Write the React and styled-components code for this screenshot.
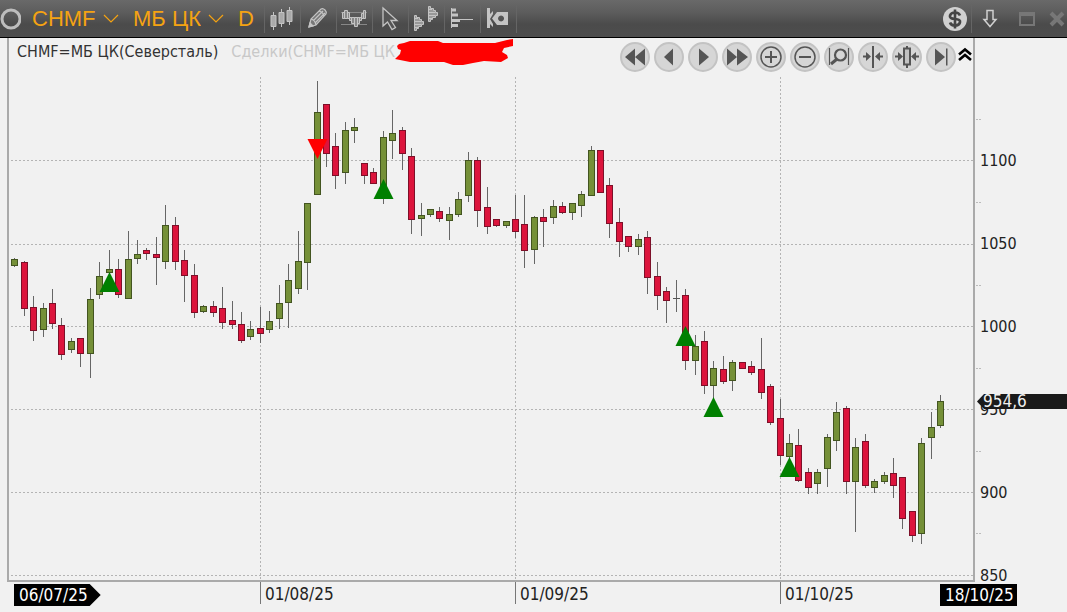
/*
 * ChartPage
 *
 * Candlestick chart window with toolbar, price axis and time axis
 */
import React from 'react';
import styled, { createGlobalStyle, css } from 'styled-components';

const GlobalStyle = createGlobalStyle`
  * {
    box-sizing: border-box;
  }
  body {
    margin: 0;
    background: #f1f1f1;
    font-family: "DejaVu Sans Condensed", "Noto Sans", sans-serif;
    color: #222;
  }
`;

const ChartWindow = styled.div`
  display: flex;
  flex-direction: column;
  min-height: 100vh;
`;

const Toolbar = styled.header`
  display: flex;
  align-items: center;
  height: 38px;
  background: linear-gradient(#696969, #5c5c5c 35%, #4b4b4b 65%, #4d4d4d);
  border-bottom: 1px solid #000;
`;

const plainButton = css`
  display: flex;
  align-items: center;
  justify-content: center;
  padding: 0;
  border: 0;
  background: none;
  cursor: pointer;
`;

const Ring = styled.button`
  ${plainButton}
  width: 32px;
  height: 37px;
  padding-right: 11px;
`;

const Picker = styled.label`
  display: flex;
  align-items: center;
  gap: 7px;
  margin-right: 14px;
`;

const PickerSelect = styled.select`
  appearance: none;
  padding: 0;
  border: 0;
  background: none;
  color: #f5a312;
  font-family: "Liberation Sans", Arial, sans-serif;
  font-size: 22px;
  line-height: 28px;
`;

const Period = styled.button`
  ${plainButton}
  color: #f5a312;
  font-family: "Liberation Sans", Arial, sans-serif;
  font-size: 22px;
  line-height: 28px;
`;

const Tools = styled.div`
  display: flex;
  margin-left: 10px;
  border-right: 1px solid #656565;
`;

const ToolButton = styled.button`
  ${plainButton}
  width: 36px;
  height: 28px;
  border-left: 1px solid #656565;
`;

const WindowButtons = styled.div`
  display: flex;
  margin-left: auto;
`;

const WindowButton = styled.button`
  ${plainButton}
  width: ${(props) => props.$width}px;
  height: 28px;
  border-left: 1px solid ${(props) => (props.$divided ? '#656565' : 'transparent')};
`;

const ChartArea = styled.main`
  flex: 1;
  display: grid;
  grid-template-columns: minmax(0, 1fr) 92px;
  grid-template-rows: minmax(0, 1fr) 30px;
  padding-left: 7px;
`;

const Panel = styled.section`
  display: flex;
  flex-direction: column;
  border: 2px solid #aaa;
  border-top: 0;
`;

const PanelHeader = styled.div`
  display: flex;
  align-items: center;
  height: 37px;
`;

const Legend = styled.div`
  display: flex;
  align-items: center;
  height: 28px;
  padding-left: 8px;
  margin-bottom: 10px;
  font-size: 16px;
  line-height: 20px;
  white-space: nowrap;
`;

const Series = styled.span`
  margin-right: 13px;
  color: ${(props) => (props.$muted ? '#c8c8c8' : '#333')};
  &:last-of-type {
    margin-right: 0;
  }
`;

const NavButtons = styled.div`
  display: flex;
  gap: 4px;
  margin-left: auto;
`;

const NavButton = styled.button`
  ${plainButton}
  width: 30px;
  height: 30px;
  border: 2px solid #c3c3c3;
  border-radius: 50%;
  background: #d6d6d6;
`;

const CollapseButton = styled.button`
  ${plainButton}
  width: 17px;
  height: 30px;
  padding-bottom: 6px;
`;

const Plot = styled.svg`
  display: block;
  flex: 1;
  width: 100%;
  height: 0;
  min-height: 300px;
`;

const PriceAxis = styled.div`
  position: relative;
  grid-column: 2;
  grid-row: 1 / 3;
  display: flex;
  flex-direction: column;
  justify-content: space-between;
  padding: 114px 0 27px 5px;
  font-size: 16px;
  line-height: 18px;
`;

const PriceTag = styled.div`
  position: absolute;
  top: 62%;
  left: 2px;
  right: 0;
  padding-left: 6px;
  background: #1a1a1a;
  color: #f1f1f1;
  font-size: 17px;
  line-height: 15px;
  clip-path: polygon(0 50%, 7px 0, 100% 0, 100% 100%, 7px 100%);
`;

const TimeAxis = styled.div`
  grid-column: 1 / 3;
  grid-row: 2;
  display: grid;
  grid-template-columns: 246fr 255fr 265fr 160fr 127px;
  align-items: start;
  padding-left: 7px;
  font-size: 17px;
  line-height: 20px;
`;

const DateLabel = styled.div`
  padding-left: 4px;
  padding-top: 2px;
  border-left: 1px solid #777;
`;

const DateBadge = styled.div`
  justify-self: start;
  margin-top: 2px;
  padding: 1px ${(props) => (props.$arrow ? 13 : 3)}px 1px 5px;
  background: #000;
  color: #fff;
  ${(props) => props.$arrow && css`
    clip-path: polygon(0 0, calc(100% - 11px) 0, 100% 50%, calc(100% - 11px) 100%, 0 100%);
  `}
`;

// direction, high, body top, body bottom, low
const candles = [
  ['G', 258, 259, 265, 266], ['R', 261, 262, 308, 315], ['R', 296, 307, 330, 340],
  ['G', 303, 308, 329, 336], ['R', 289, 303, 323, 328], ['R', 318, 325, 354, 359],
  ['G', 338, 341, 349, 352], ['R', 338, 338, 353, 366], ['G', 288, 299, 353, 377],
  ['G', 262, 276, 294, 298], ['G', 250, 269, 272, 290], ['R', 259, 269, 294, 297],
  ['G', 231, 259, 298, 298], ['G', 240, 254, 258, 263], ['R', 248, 250, 253, 259],
  ['R', 237, 254, 257, 284], ['G', 205, 225, 261, 268], ['R', 217, 225, 261, 269],
  ['R', 250, 260, 275, 301], ['R', 264, 275, 312, 317], ['G', 305, 306, 311, 312],
  ['R', 301, 306, 312, 316], ['R', 287, 308, 322, 328], ['R', 301, 320, 324, 328],
  ['R', 312, 324, 340, 342], ['G', 321, 329, 336, 339], ['R', 307, 328, 333, 342],
  ['G', 311, 321, 329, 332], ['G', 285, 303, 318, 328], ['G', 264, 280, 302, 327],
  ['G', 231, 261, 288, 293], ['G', 203, 203, 262, 289], ['G', 81, 112, 194, 194],
  ['R', 104, 104, 153, 166], ['R', 133, 146, 175, 188], ['G', 122, 130, 172, 183],
  ['G', 118, 127, 130, 142], ['R', 163, 163, 175, 183], ['R', 168, 172, 183, 183],
  ['G', 131, 137, 190, 203], ['G', 110, 133, 140, 158], ['R', 127, 130, 153, 169],
  ['R', 148, 156, 219, 233], ['G', 203, 215, 218, 235], ['G', 209, 209, 214, 216],
  ['R', 207, 211, 218, 221], ['G', 207, 214, 220, 239], ['G', 192, 199, 214, 216],
  ['G', 152, 160, 195, 201], ['R', 157, 160, 210, 226], ['R', 187, 207, 226, 233],
  ['R', 219, 219, 225, 226], ['G', 221, 221, 225, 227], ['R', 195, 219, 231, 237],
  ['R', 195, 224, 250, 267], ['G', 216, 217, 249, 263], ['R', 209, 217, 221, 246],
  ['G', 200, 206, 217, 223], ['R', 202, 206, 212, 213], ['G', 203, 203, 212, 219],
  ['G', 191, 194, 205, 216], ['G', 146, 150, 195, 195], ['R', 150, 150, 192, 192],
  ['R', 178, 185, 223, 237], ['R', 208, 222, 241, 256], ['R', 236, 236, 246, 251],
  ['G', 234, 239, 246, 254], ['R', 231, 237, 277, 293], ['R', 262, 276, 295, 309],
  ['R', 287, 291, 300, 322], ['G', 280, 298, 298, 311], ['R', 289, 295, 360, 369],
  ['G', 335, 346, 360, 374], ['R', 331, 341, 385, 393], ['G', 361, 368, 385, 399],
  ['R', 356, 369, 381, 383], ['G', 360, 362, 380, 390], ['R', 362, 362, 368, 368],
  ['R', 361, 366, 372, 374], ['R', 338, 369, 392, 398], ['R', 384, 386, 422, 424],
  ['R', 399, 418, 455, 464], ['G', 434, 443, 456, 460], ['R', 429, 445, 480, 481],
  ['R', 468, 472, 487, 493], ['G', 469, 472, 483, 493], ['G', 434, 437, 468, 486],
  ['G', 402, 412, 440, 450], ['R', 406, 408, 481, 493], ['G', 438, 447, 481, 531],
  ['R', 434, 441, 485, 487], ['G', 479, 481, 487, 492], ['G', 472, 475, 481, 483],
  ['R', 458, 473, 485, 497], ['R', 477, 477, 518, 528], ['R', 511, 511, 535, 541],
  ['G', 438, 443, 533, 543], ['G', 412, 427, 437, 458], ['G', 395, 401, 425, 427]
];

const FIRST_X = 14.2;
const STEP = 926 / 98;

// candle number, tip y
const buys = [[10, 272], [39, 179], [71, 326], [74, 397], [82, 457]];
const sells = [[32, 159]];

const priceLines = [160, 244, 326, 409, 492, 575];
const priceTicks = [119, 202, 285, 368, 451, 533];
const monthLines = [26, 53, 81];
const prices = ['1100', '1050', '1000', '950', '900', '850'];
const dates = ['01/08/25', '01/09/25', '01/10/25'];

const candleX = (index) => Math.round(FIRST_X + index * STEP);

const candleArray = candles.map(([dir, high, top, bottom, low], index) => {
  const x = candleX(index);
  return (
    <g key={index}>
      <path d={`M${x + 0.5} ${high}V${low + 1}`} stroke="#666" />
      {top === bottom ? (
        <path d={`M${x - 3} ${top + 0.5}h7`} stroke="#555" />
      ) : (
        <rect
          x={x - 2.5}
          y={top + 0.5}
          width="6"
          height={bottom - top}
          fill={dir === 'G' ? '#759038' : '#dc143c'}
          stroke={dir === 'G' ? '#435520' : '#7d1029'}
        />
      )}
    </g>
  );
});

function CandleChart() {
  return (
    <Plot viewBox="9 75 964 505" preserveAspectRatio="none" role="img" aria-label="CHMF">
      <g fill="none" stroke="#b4b4b4" strokeDasharray="2 2">
        {priceLines.map((y) => <path key={y} d={`M11 ${y + 0.5}H973`} />)}
        {monthLines.map((i) => <path key={i} d={`M${candleX(i) + 0.5} 77V580`} />)}
      </g>
      {candleArray}
      {buys.map(([i, y]) => (
        <path key={i} d={`M${candleX(i) + 0.5} ${y}l10 20h-20z`} fill="#008000" />
      ))}
      {sells.map(([i, y]) => (
        <path key={i} d={`M${candleX(i) + 0.5} ${y}l-10 -20h20z`} fill="#ff0000" />
      ))}
    </Plot>
  );
}

const TickMarks = styled.svg`
  position: absolute;
  top: 0;
  left: 0;
  width: 8px;
  height: 100%;
`;

const Chevron = () => (
  <svg width="16" height="9" fill="none" stroke="#f5a312" strokeWidth="1.2">
    <path d="M1 1l7 7 7-7" />
  </svg>
);

const toolIcons = [
  {
    name: 'Candles',
    icon: (
      <g fill="#aaa" stroke="#c4c4c4">
        <path d="M4.500 6v18M12.500 3v18M20.500 1v18" fill="none" />
        <path d="M2 9.500h5v11H2zM10 6.500h5v11h-5zM18 4.500h5v11h-5z" />
      </g>
    )
  },
  {
    name: 'Draw',
    icon: (
      <g fill="#777" stroke="#c4c4c4" strokeWidth="1.200">
        <path d="M4 21l2-8L16 3q2-1 4 1t1 4L11 19z" />
        <path d="M6 13q4 1 5 6M8.500 14.500L18 5M10 17L20 7M14 5q4 1 5 5" fill="none" />
        <path d="M4 21l1-4 3 3z" fill="#c4c4c4" />
      </g>
    )
  },
  {
    name: 'Indicators',
    icon: (
      <g stroke="#c4c4c4" fill="#888">
        <path d="M0 6.500h26M0 18.500h26" stroke="#888" />
        <path d="M1.500 6.500h2v6h-2zM3.500 4.500h3v8h-3zM6.500 6.500h2v6h-2zM8.500 11.500h2v3h-2zM10.500 11.500h3v6h-3zM13.500 11.500h3v9h-3zM16.500 11.500h2v6h-2zM18.500 11.500h2v3h-2zM20.500 7.500h2v5h-2zM22.500 4.500h2v8h-2z" />
      </g>
    )
  },
  {
    name: 'Cursor',
    icon: <path d="M6 2v18l4.500-4 4.500 7.500 3.500-2-4.500-7h6z" fill="#555" stroke="#c4c4c4" strokeWidth="1.300" />
  },
  {
    name: 'Volume profile',
    icon: (
      <g stroke="#c4c4c4" fill="#999">
        <path d="M1.500 9.500h2v2h3v2h2v2h2v3h-2v2h-3v2h-2v2h-2z" />
        <path d="M1 12.500h4M1 15.500h7M1 18.500h7M1 21.500h4" />
        <path d="M15.500 .500h2v2h3v2h2v2h2v3h-2v2h-3v2h-2v2h-2z" />
        <path d="M15 3.500h4M15 6.500h7M15 9.500h7M15 12.500h4" />
      </g>
    )
  },
  {
    name: 'Order book',
    icon: (
      <g stroke="#c4c4c4" fill="none">
        <path d="M2 4h5M2 9h7M2 14.500h9M2 19.500h7" strokeWidth="3" />
        <path d="M2.500 2v20M10 13.500h14" />
      </g>
    )
  },
  {
    name: 'Hide',
    icon: (
      <g fill="#c4c4c4">
        <path d="M2 2h3v6l3-3v3l-3 5 3 5v3l-3-3v4H2z" />
        <path d="M12 6h11v13H12l-5-6.500zM16 9.500a3 3 0 1 0 .1 0z" fillRule="evenodd" />
      </g>
    )
  }
];

const navIcons = [
  { name: 'First', icon: <path d="M13 4.500v17L3 13zM23 4.500v17L13 13z" fill="#555" /> },
  { name: 'Back', icon: <path d="M17 4.500v17L8 13z" fill="#555" /> },
  { name: 'Forward', icon: <path d="M9 4.500v17L19 13z" fill="#555" /> },
  { name: 'Last', icon: <path d="M3 4.500v17L13 13zM13 4.500v17L24 13z" fill="#555" /> },
  {
    name: 'Zoom in',
    icon: (
      <g fill="none" stroke="#555">
        <circle cx="13" cy="13" r="10" strokeWidth="1.500" />
        <path d="M7 13h12M13 7v12" strokeWidth="2" />
      </g>
    )
  },
  {
    name: 'Zoom out',
    icon: (
      <g fill="none" stroke="#555">
        <circle cx="13" cy="13" r="10" strokeWidth="1.500" />
        <path d="M7 13h12" strokeWidth="2" />
      </g>
    )
  },
  {
    name: 'Zoom area',
    icon: (
      <g fill="none" stroke="#555">
        <path d="M3.500 4v17M22.500 4v17" strokeWidth="1.200" />
        <circle cx="14.500" cy="11" r="5.500" strokeWidth="2.200" />
        <path d="M11 15l-6 5" strokeWidth="3" />
      </g>
    )
  },
  {
    name: 'Narrow',
    icon: (
      <g fill="#555" stroke="#555">
        <path d="M13 2v22M3 12.500h5M18 12.500h5" strokeWidth="2" />
        <path d="M6 8v9l5-4.500zM20 8v9l-5-4.500z" stroke="none" />
      </g>
    )
  },
  {
    name: 'Fit candles',
    icon: (
      <g fill="none" stroke="#555">
        <path d="M13 2v3M13 21v3M1 12.500h4M21 12.500h4" strokeWidth="2" />
        <path d="M10 4.500h6v16h-6z" fill="#c3c3c3" strokeWidth="2" />
        <path d="M4 8v9l5-4.500zM22 8v9l-5-4.500z" fill="#555" stroke="none" />
      </g>
    )
  },
  { name: 'To end', icon: <path d="M7 4.500v17L17 13zM18 4.500h1.500v17H18z" fill="#555" /> }
];

export default function App() {
  return (
    <ChartWindow>
      <GlobalStyle />
      <Toolbar>
        <Ring aria-label="Link">
          <svg width="22" height="22" fill="none">
            <circle cx="11" cy="11" r="9" stroke="#bdbdbd" strokeWidth="3" />
          </svg>
        </Ring>
        <Picker>
          <PickerSelect aria-label="Instrument">
            <option>CHMF</option>
          </PickerSelect>
          <Chevron />
        </Picker>
        <Picker>
          <PickerSelect aria-label="Board">
            <option>МБ ЦК</option>
          </PickerSelect>
          <Chevron />
        </Picker>
        <Period>D</Period>
        <Tools>
          {toolIcons.map(({ name, icon }) => (
            <ToolButton key={name} aria-label={name}>
              <svg width="26" height="25">{icon}</svg>
            </ToolButton>
          ))}
        </Tools>
        <WindowButtons>
          <WindowButton $width={34} aria-label="Trade">
            <svg width="26" height="26">
              <circle cx="13" cy="13" r="12" fill="#d0d0d0" />
              <path
                d="M18 9.500q-1-3-5-3t-5 3 5 3.500 5 3.500-5 3-5-3M13 3.500v19"
                fill="none"
                stroke="#444"
                strokeWidth="2.600"
              />
            </svg>
          </WindowButton>
          <WindowButton $width={36} $divided aria-label="Pin">
            <svg width="16" height="20" fill="none" stroke="#d0d0d0" strokeWidth="1.500">
              <path d="M5 1.500h6v9h3l-6 7-6-7h3z" />
            </svg>
          </WindowButton>
          <WindowButton $width={38} aria-label="Maximize">
            <svg width="16" height="14" fill="none" stroke="#777" strokeWidth="2">
              <path d="M1 1h14v12H1zM1 3h14" />
            </svg>
          </WindowButton>
          <WindowButton $width={22} aria-label="Close">
            <svg width="16" height="16" stroke="#777" strokeWidth="4">
              <path d="M2 2l12 12M14 2L2 14" />
            </svg>
          </WindowButton>
        </WindowButtons>
      </Toolbar>
      <ChartArea>
        <Panel>
          <PanelHeader>
            <Legend>
              <Series>CHMF=МБ ЦК(Северсталь)</Series>
              <Series $muted>Сделки(CHMF=МБ ЦК</Series>
              <svg width="120" height="26" fill="#ff0000">
                <path d="M2 7l2-2 5-1 6-2h28l5 2h52l12-3 6-1v7l-9 2-2 4 5 3 1 3-7 4-17-1-11 2-10 2H58l-9-3H15L0 20l5-5 1-4-3-1z" />
              </svg>
            </Legend>
            <NavButtons>
              {navIcons.map(({ name, icon }) => (
                <NavButton key={name} aria-label={name}>
                  <svg width="26" height="26">{icon}</svg>
                </NavButton>
              ))}
            </NavButtons>
            <CollapseButton aria-label="Collapse">
              <svg width="14" height="14" fill="none" stroke="#000" strokeWidth="2.600">
                <path d="M1 7.500l6-5 6 5M1 13l6-5 6 5" />
              </svg>
            </CollapseButton>
          </PanelHeader>
          <CandleChart />
        </Panel>
        <PriceAxis>
          <TickMarks viewBox="0 38 8 574" preserveAspectRatio="none">
            {priceTicks.map((y) => (
              <path key={y} d={`M1 ${y + 0.5}h5`} stroke="#bbb" strokeDasharray="2 1" />
            ))}
          </TickMarks>
          {prices.map((price) => <span key={price}>{price}</span>)}
          <PriceTag>954,6</PriceTag>
        </PriceAxis>
        <TimeAxis>
          <DateBadge $arrow>06/07/25</DateBadge>
          {dates.map((date) => <DateLabel key={date}>{date}</DateLabel>)}
          <DateBadge>18/10/25</DateBadge>
        </TimeAxis>
      </ChartArea>
    </ChartWindow>
  );
}
